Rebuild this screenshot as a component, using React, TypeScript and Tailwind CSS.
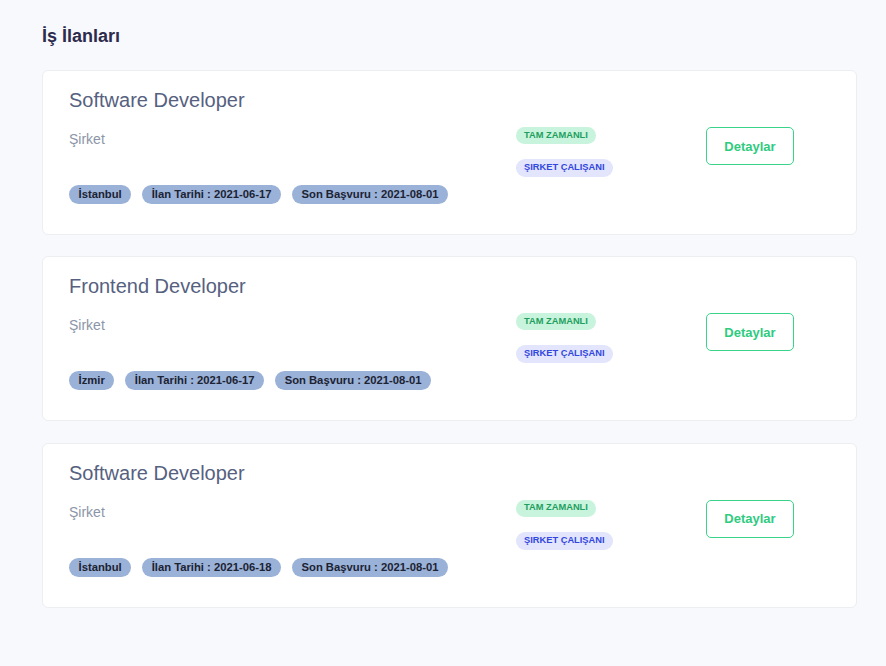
const jobs = [
  { title: 'Software Developer', city: 'İstanbul', posted: '2021-06-17', deadline: '2021-08-01' },
  { title: 'Frontend Developer', city: 'İzmir', posted: '2021-06-17', deadline: '2021-08-01' },
  { title: 'Software Developer', city: 'İstanbul', posted: '2021-06-18', deadline: '2021-08-01' },
]

function Tag({ children }: { children: React.ReactNode }) {
  return (
    <span className="inline-flex h-[19px] items-center rounded-full bg-[#9ab1d8] px-[9.5px] text-[11.25px] font-bold text-[#1c2333]">
      {children}
    </span>
  )
}

export default function App() {
  return (
    <div
      className="min-h-[666px] bg-[#f8f9fd] pl-[42px] pr-[29px] pt-[24px] pb-[40px]"
      style={{ fontFamily: '"Liberation Sans", Arial, sans-serif' }}
    >
      <h1 className="text-[18px] font-bold leading-[24px] text-[#2d2b4c]">İş İlanları</h1>

      <div className="mt-[22px] flex flex-col gap-[21.3px]">
        {jobs.map((job, i) => (
          <div
            key={i}
            className="flex h-[165px] items-start rounded-[6px] border border-[#eceef2] bg-white pl-[26px] pt-[17px]"
          >
            <div className="w-[447px]">
              <h2 className="text-[20px] leading-[24px] text-[#56617f]">{job.title}</h2>
              <p className="mt-[17px] text-[14px] leading-[20px] text-[#8c95a7]">Şirket</p>
              <div className="mt-[36px] flex gap-[11px]">
                <Tag>{job.city}</Tag>
                <Tag>İlan Tarihi : {job.posted}</Tag>
                <Tag>Son Başvuru : {job.deadline}</Tag>
              </div>
            </div>

            <div className="flex w-[190px] flex-col items-start gap-[15px] pt-[39px]">
              <span className="inline-flex h-[17px] items-center rounded-full bg-[#c8f3dd] px-[8px] text-[9.3px] font-bold text-[#1f9f5f]">
                TAM ZAMANLI
              </span>
              <span className="inline-flex h-[18px] items-center rounded-full bg-[#e2e5fb] px-[8px] text-[9.3px] font-bold text-[#3247df]">
                ŞIRKET ÇALIŞANI
              </span>
            </div>

            <div className="pt-[39px]">
              <button className="h-[38px] w-[88px] rounded-[5px] border border-[#39d38a] bg-white pt-[1px] text-[13px] font-bold text-[#2ecb80]">
                Detaylar
              </button>
            </div>
          </div>
        ))}
      </div>
    </div>
  )
}
